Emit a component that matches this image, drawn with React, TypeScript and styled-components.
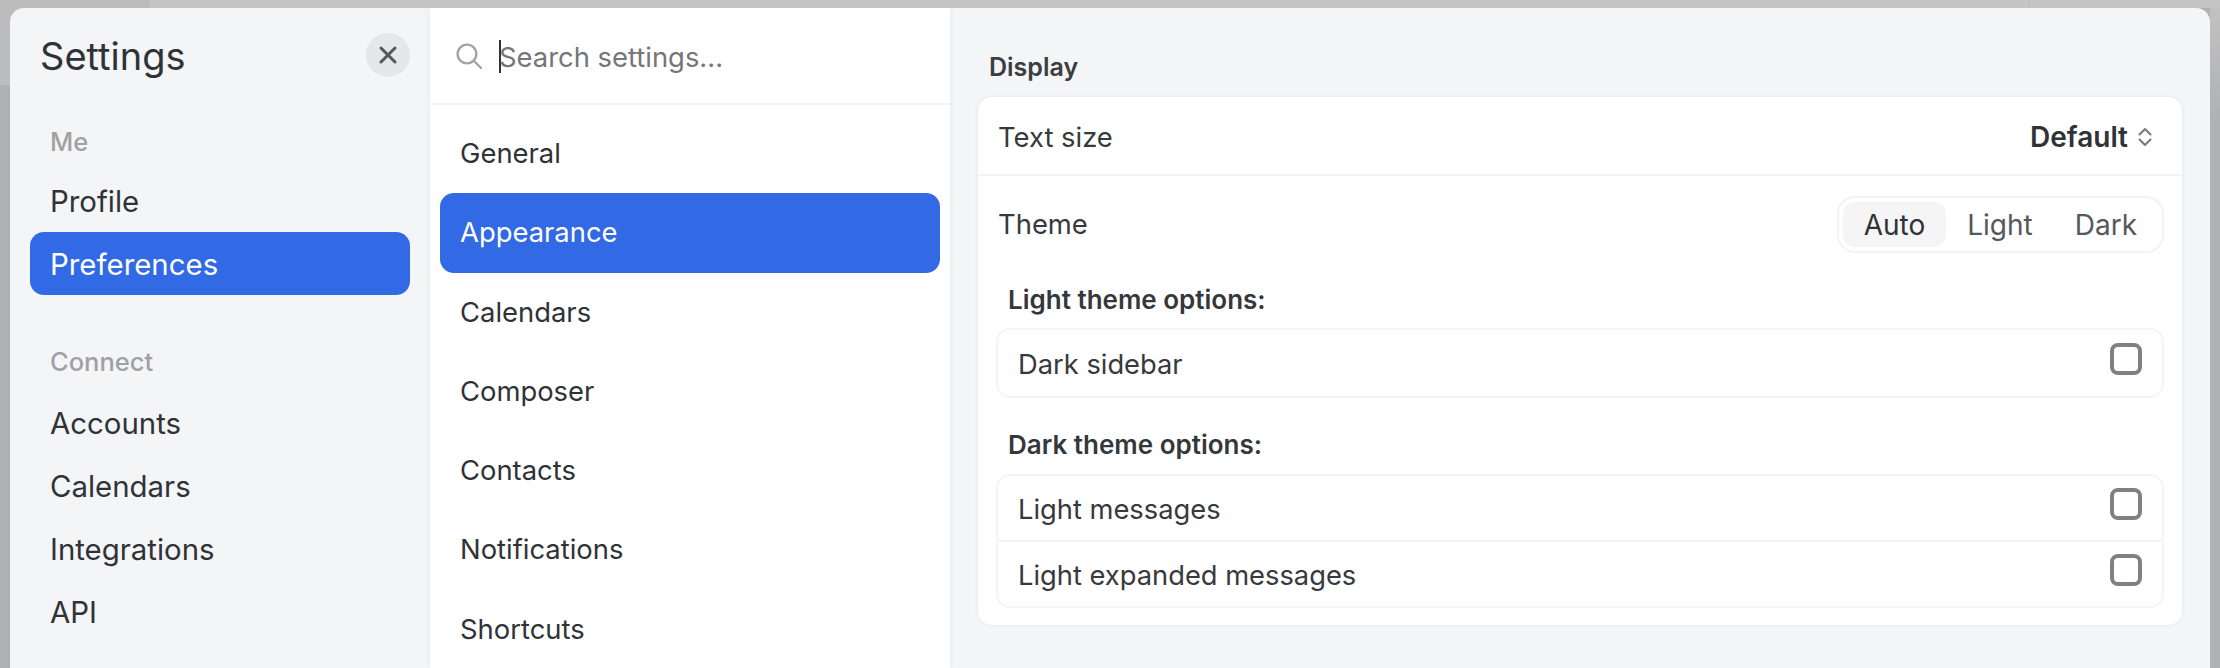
import React from 'react';
import styled, { createGlobalStyle } from 'styled-components';

const GlobalStyle = createGlobalStyle`
	html, body {
		margin: 0;
		padding: 0;
		background: #b0b1b3;
	}
	body {
		font-family: Inter, "Liberation Sans", sans-serif;
		color: #2f3237;
	}
`;

const Page = styled.div`
	box-sizing: border-box;
	width: 2220px;
	height: 668px;
	padding: 8px 10px 0;
	overflow: hidden;
	background:
		linear-gradient(#bcbcbd, #bcbcbd) 2029px 0 / 1px 8px no-repeat,
		linear-gradient(#c5c5c5, #c5c5c5) 150px 0 / 100% 8px no-repeat,
		linear-gradient(#bcbcbc, #bcbcbc) 0 0 / 150px 85px no-repeat,
		linear-gradient(#c2c2c2, #b0b1b3) 2210px 0 / 10px 120px no-repeat,
		#b0b1b3;
`;

const Modal = styled.main`
	display: grid;
	grid-template-columns: 420px 520px 1fr;
	height: 660px;
	background: #f4f5f7;
	border-radius: 14px 14px 0 0;
	overflow: hidden;
`;

const Sidebar = styled.nav`
	display: flex;
	flex-direction: column;
	padding: 25px 20px 0;
`;

const TitleRow = styled.header`
	display: flex;
	align-items: center;
	justify-content: space-between;
	height: 44px;
	margin-bottom: 51px;
`;

const Title = styled.h1`
	margin: 2px 0 0 10px;
	font-size: 38px;
	font-weight: 400;
	color: #2f3237;
`;

const CloseButton = styled.button`
	display: flex;
	align-items: center;
	justify-content: center;
	width: 44px;
	height: 44px;
	padding: 0;
	border: 0;
	border-radius: 50%;
	background: #e6e7e9;
`;

const SectionLabel = styled.div<{ $top?: number; $after?: number }>`
	height: 41px;
	margin-top: ${p => p.$top ?? 0}px;
	margin-bottom: ${p => p.$after ?? 0}px;
	padding-left: 20px;
	font-size: 25.5px;
	font-weight: 500;
	line-height: 27px;
	color: #a0a1a3;
`;

const SideItem = styled.div<{ $active?: boolean }>`
	height: 63px;
	padding-left: 20px;
	border-radius: 14px;
	font-size: 29.4px;
	line-height: 65px;
	color: ${p => (p.$active ? '#ffffff' : '#2f3237')};
	background: ${p => (p.$active ? '#3269e5' : 'transparent')};
`;

const MiddleColumn = styled.section`
	display: flex;
	flex-direction: column;
	background: #ffffff;
	box-shadow: 0 0 6px rgba(0, 0, 0, 0.06);
`;

const SearchBar = styled.div`
	display: flex;
	align-items: center;
	flex: none;
	box-sizing: border-box;
	height: 97px;
	padding: 0 0 0 26px;
	border-bottom: 2px solid #f3f3f4;
	font-size: 27.4px;
	color: #757679;
`;

const Caret = styled.span`
	flex: none;
	width: 2px;
	height: 33px;
	margin: 2px -2px 0 17px;
	background: #2f3237;
`;

const SearchHint = styled.span`
	margin-top: 2px;
`;

const MiddleList = styled.div`
	display: flex;
	flex-direction: column;
	padding: 9px 10px 0;
`;

const MiddleItem = styled.div<{ $active?: boolean }>`
	flex: none;
	height: 79.3px;
	padding-left: 20px;
	border-radius: 14px;
	font-size: 27.4px;
	line-height: 79px;
	color: ${p => (p.$active ? '#ffffff' : '#2f3237')};
	background: ${p => (p.$active ? '#3269e5' : 'transparent')};
`;

const Content = styled.section`
	padding: 0 28px 0 28px;
`;

const ContentHeading = styled.h2`
	height: 89px;
	margin: 0;
	padding-left: 11px;
	box-sizing: border-box;
	font-size: 25px;
	font-weight: 600;
	line-height: 118px;
	color: #3a3d41;
`;

const Card = styled.div`
	height: 528px;
	background: #ffffff;
	border-radius: 14px;
	box-shadow: 0 0 5px rgba(0, 0, 0, 0.07);
`;

const CardRow = styled.div<{ $height: number; $divided?: boolean }>`
	display: flex;
	align-items: center;
	justify-content: space-between;
	box-sizing: border-box;
	height: ${p => p.$height}px;
	padding: ${p => (p.$divided ? '2px' : '0')} 18px 0 20px;
	font-size: 27.4px;
	color: #36393d;
	border-bottom: ${p => (p.$divided ? '2px solid #f3f3f4' : '0')};
`;

const SelectValue = styled.div`
	display: flex;
	align-items: center;
	gap: 10px;
	margin-right: 12px;
	font-size: 28px;
	font-weight: 600;
	color: #2f3237;
`;

const Segmented = styled.div`
	display: flex;
	box-sizing: border-box;
	height: 57px;
	padding: 4px;
	border: 2px solid #f3f3f4;
	border-radius: 18px;
`;

const Segment = styled.div<{ $active?: boolean }>`
	padding: 0 21px;
	border-radius: 12px;
	font-size: 28px;
	line-height: 46px;
	color: ${p => (p.$active ? '#2f3237' : '#55585c')};
	background: ${p => (p.$active ? '#f5f5f5' : 'transparent')};
`;

const OptionsHeading = styled.div<{ $height: number; $top: number }>`
	box-sizing: border-box;
	height: ${p => p.$height}px;
	padding: ${p => p.$top}px 0 0 30px;
	font-size: 26px;
	font-weight: 600;
	line-height: 32px;
	color: #34373b;
`;

const OptionGroup = styled.div`
	margin: 0 18px;
	border: 2px solid #f5f5f6;
	border-radius: 14px;
`;

const OptionRow = styled.div<{ $height: number; $divided?: boolean }>`
	display: flex;
	align-items: center;
	justify-content: space-between;
	box-sizing: border-box;
	height: ${p => p.$height}px;
	padding: 2px 20px 0 20px;
	font-size: 27.3px;
	color: #36393d;
	border-bottom: ${p => (p.$divided ? '2px solid #f3f3f4' : '0')};
`;

const Checkbox = styled.span`
	flex: none;
	box-sizing: border-box;
	width: 32px;
	height: 32px;
	margin-bottom: 10px;
	border: 4px solid #808080;
	border-radius: 8px;
`;

const CloseIcon = () => (
	<svg width="18" height="18" viewBox="0 0 18 18" fill="none" stroke="#55575b" strokeWidth="3" strokeLinecap="round">
		<path d="M2 2 16 16M16 2 2 16" />
	</svg>
);

const SearchIcon = () => (
	<svg width="26" height="26" viewBox="0 0 26 26" fill="none" stroke="#a3a3a3" strokeWidth="2.4" strokeLinecap="round">
		<circle cx="11" cy="11" r="9.4" />
		<path d="M18 18 25 25" />
	</svg>
);

const UpDownIcon = () => (
	<svg width="14" height="20" viewBox="0 0 14 20" fill="none" stroke="#77797c" strokeWidth="2" strokeLinecap="round" strokeLinejoin="round">
		<path d="M1.5 7.5 7 2l5.5 5.5M1.5 12.5 7 18l5.5-5.5" />
	</svg>
);

const App: React.FC = () => {
	return (
		<Page>
			<GlobalStyle />
			<Modal>
				<Sidebar>
					<TitleRow>
						<Title>Settings</Title>
						<CloseButton aria-label="Close"><CloseIcon /></CloseButton>
					</TitleRow>
					<SectionLabel>Me</SectionLabel>
					<SideItem>Profile</SideItem>
					<SideItem $active>Preferences</SideItem>
					<SectionLabel $top={53} $after={2}>Connect</SectionLabel>
					<SideItem>Accounts</SideItem>
					<SideItem>Calendars</SideItem>
					<SideItem>Integrations</SideItem>
					<SideItem>API</SideItem>
				</Sidebar>
				<MiddleColumn>
					<SearchBar>
						<SearchIcon />
						<Caret />
						<SearchHint>Search settings...</SearchHint>
					</SearchBar>
					<MiddleList>
						{['General', 'Appearance', 'Calendars', 'Composer', 'Contacts', 'Notifications', 'Shortcuts'].map(item => (
							<MiddleItem key={item} $active={item === 'Appearance'}>{item}</MiddleItem>
						))}
					</MiddleList>
				</MiddleColumn>
				<Content>
					<ContentHeading>Display</ContentHeading>
					<Card>
						<CardRow $height={79} $divided>
							Text size
							<SelectValue>Default <UpDownIcon /></SelectValue>
						</CardRow>
						<CardRow $height={96}>
							Theme
							<Segmented>
								<Segment $active>Auto</Segment>
								<Segment>Light</Segment>
								<Segment>Dark</Segment>
							</Segmented>
						</CardRow>
						<OptionsHeading $height={56} $top={12}>Light theme options:</OptionsHeading>
						<OptionGroup>
							<OptionRow $height={66}>Dark sidebar<Checkbox /></OptionRow>
						</OptionGroup>
						<OptionsHeading $height={76} $top={31}>Dark theme options:</OptionsHeading>
						<OptionGroup>
							<OptionRow $height={66} $divided>Light messages<Checkbox /></OptionRow>
							<OptionRow $height={64}>Light expanded messages<Checkbox /></OptionRow>
						</OptionGroup>
					</Card>
				</Content>
			</Modal>
		</Page>
	);
};

export default App;
